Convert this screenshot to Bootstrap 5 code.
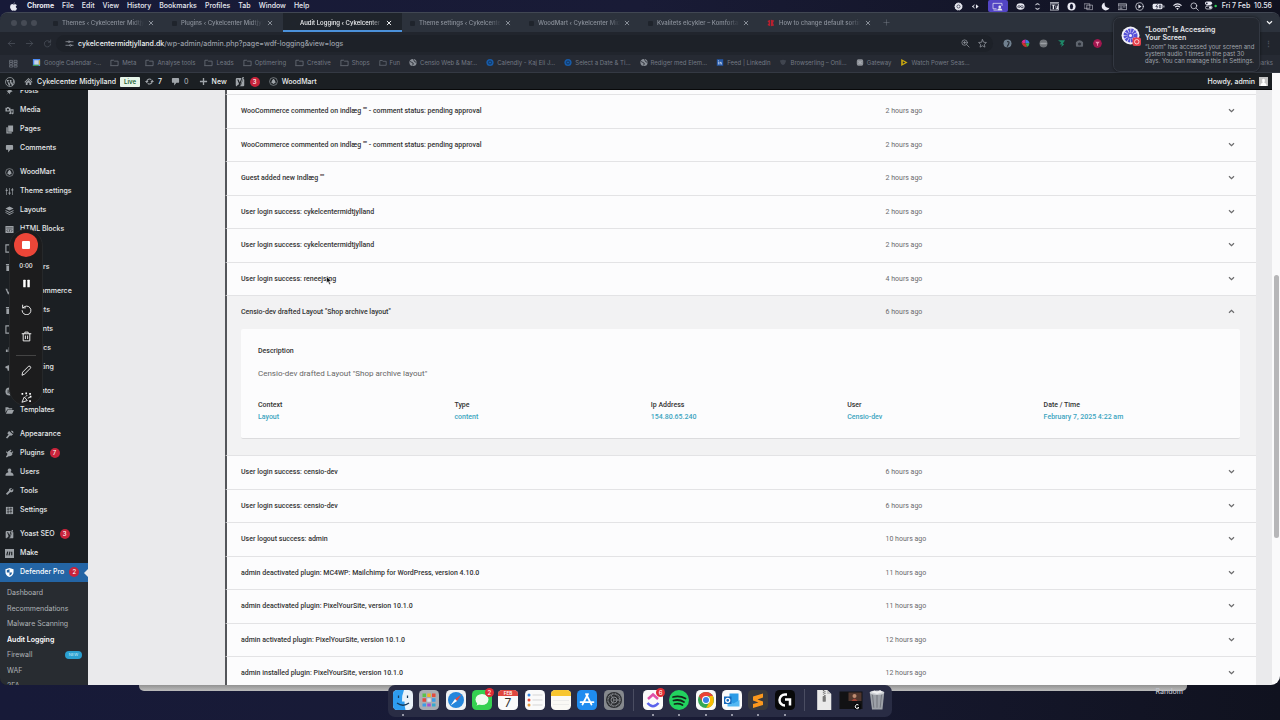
<!DOCTYPE html>
<html lang="en">
<head>
<meta charset="utf-8">
<meta name="viewport" content="width=device-width, initial-scale=1">
<title>Audit Logging ‹ Cykelcenter Midtjylland</title>
<link href="https://cdn.jsdelivr.net/npm/bootstrap@5.3.0/dist/css/bootstrap.min.css" rel="stylesheet">
<style>
  body{font:500 7px/10px Inter,"Liberation Sans",sans-serif;color:#e4e5e8;background:linear-gradient(90deg,#171a38,#191b36 50%,#10121f);}
  a{color:inherit;text-decoration:none}
  button{border:0;padding:0;background:none;color:inherit;font:inherit;line-height:inherit}
  svg{display:block;flex:none}
  .ic{width:9px;height:9px;fill:currentColor}
  .ln{fill:none;stroke:currentColor;stroke-width:1.6;stroke-linecap:round;stroke-linejoin:round}
  .menubar{height:12px;padding:0 8px 0 10px;color:#e9eaf2}
  .menubar .apps{gap:8px}
  .menubar .apple{width:7px;margin-right:2px}
  .menubar .tray{gap:8px}
  .share{width:20px;height:12px;background:#5244c4;border-radius:2px}
  .window{border-radius:8px 8px 9px 7px;background:#21252d;border-top:1px solid #414753}
  .tabs{height:19px;background:#2c323c;color:#8b919b;padding-left:11px}
  .light{width:6px;height:6px;border-radius:50%;background:#464b55}
  .lights{gap:4px;width:34px}
  .btab{width:119px;height:19px;padding:1px 6px 0 8px;gap:4px}
  .btab.active{color:#f1f3f5;background:linear-gradient(#1f242b 17px,#4b91da 17px)}
  .fav{width:5px;height:5px;border-radius:1px;background:#1f242c}
  .tabname{width:82px;overflow:hidden;white-space:nowrap;font-size:6px;-webkit-mask-image:linear-gradient(90deg,#000 85%,transparent);mask-image:linear-gradient(90deg,#000 85%,transparent)}
  .x{width:6px;height:6px}
  .tools{height:23px;padding:1px 8px 0 7px;color:#4e545e}
  .address{background:#1d2128;border-radius:9px;height:17px;color:#9a9fa7;padding:0 6px 0 9px;margin-left:4px;flex:1 1 auto}
  .host{color:#eff1f3}
  .exts{gap:9px;width:279px;padding-left:10px}
  .ext{width:9px;height:9px;border-radius:50%}
  .marks{height:18px;background:#262a33;color:#737983;padding:0 7px 0 9px;border-bottom:1px solid #343943;font-weight:400;font-size:6px}
  .marks .list{gap:9px}
  .bm{gap:3px}
  .marks .bm:nth-of-type(n+8) .ic{width:8px}
  .adminbar{height:17px;background:#1b1f23;padding:2px 4px 0 5px;color:#eef0f1;border-bottom:1px solid #08090a}
  .gray{color:#a0a5aa}
  .live{background:#e6f5e8;color:#19602e;font-weight:600;border-radius:1px;height:10px;width:20px;font-size:6px;line-height:10px}
  .cnt{min-width:10px;height:10px;border-radius:5px;background:#c9243b;color:#fff;font-size:6px;line-height:10px;text-align:center}
  .mi .cnt{margin-left:-1px}
  .side{width:88px;background:#1b1f23;color:#e8eaeb}
  .side ul{margin:0;padding:0;list-style:none}
  .top-list{margin-top:-8px !important}
  .mi{height:19px;padding-left:5px;gap:6px}
  .mi svg{color:#9ca1a6}
  .gap-top{margin-top:5px}
  .current{background:#2465a5;color:#fff;position:relative}
  .current svg{color:#fff}
  .current::after{content:"";position:absolute;right:0;top:6px;border:4px solid transparent;border-right-color:#eaeaec;border-left:0}
  .sub{background:#282c31;padding:4px 6px 0 7px !important;color:#afb3b7;font-weight:400;flex:1 1 0;overflow:hidden}
  .sub li{height:15px}
  .sub li:nth-child(even){height:16px}
  .new{background:#2ba0d0;color:#c8ecf8;border-radius:4px;width:17px;height:8px;font-size:4px;line-height:8px}
  .page{background:#eaeaec;padding-left:137px;padding-right:16px}
  .log{font-family:Roboto,"Liberation Sans",sans-serif;color:#333;background:#fcfcfd}
  .log .start{height:4px;border-left:2px solid #54565a}
  .entry{border-left:2px solid #54565a;border-top:1px solid #e3e3e5}
  .row-btn{display:grid;grid-template-columns:20fr 11fr;width:100%;height:32px;padding:0 16px 0 14px;align-items:center;text-align:left}
  .tall .row-btn{height:33px}
  .ago{color:#6a6a6c;font-weight:400}
  .chev{width:9px;height:9px;margin-right:4px}
  .opened{background:#f2f2f3;padding-bottom:16px}
  .opened .row-btn{height:33px}
  .panel{background:#fcfcfd;margin:0 16px 0 14px;height:110px;padding:17px 0 0 17px;border-radius:2px;border-bottom:1px solid #dcdcde}
  .panel h2{font-size:7px;line-height:10px;font-weight:500;margin:0}
  .panel p{font-size:8px;line-height:12px;font-weight:400;color:#666;margin:12px 0 19px}
  .facts{display:grid;grid-template-columns:repeat(5,1fr);margin:0}
  .facts dt,.facts dd{font-weight:500;margin:0;line-height:12px}
  .facts dd{color:#3ba4bf}
  .scroll{width:8px;background:#fafafb;position:relative}
  .thumb{position:absolute;right:1px;width:5px;top:33%;height:43%;border-radius:3px;background:#b6b6b8}
  .loom{position:absolute;left:9px;top:229px;width:34px;height:177px;background:#1c1c1d;border-radius:17px;padding-top:3px;z-index:3;border:1px solid #26282a}
  .loom svg{width:11px;height:11px}
  .rec{width:24px;height:24px;border-radius:50%;background:#ec4638}
  .rec i{width:8px;height:8px;background:#fff;border-radius:1px}
  .note{position:absolute;right:20px;top:17px;width:147px;height:55px;border-radius:7px;background:#23272f;border:1px solid #333842;box-shadow:0 0 3px #0008;z-index:5;padding:8px 7px;gap:4px}
  .note strong{line-height:8px;font-weight:600;color:#e3e5e9}
  .note small{font-size:6px;line-height:7px;color:#a1a5ac;font-weight:400;margin-top:1px}
  .pointer{position:absolute;left:326px;top:276px;z-index:4}
  .bottom{height:35px;position:relative}
  .behind{position:absolute;left:139px;right:93px;top:0;height:6px;border-radius:0 0 5px 5px;background:linear-gradient(#929292,#bcbcbc)}
  .random{position:absolute;right:97px;top:2px;font-size:7px;color:#c0c2ca}
  .dock{position:relative;width:504px;height:32px;border-radius:7px;background:#292c44;padding:5px 5px 7px 5px}
  .dock .sep{width:1px;height:22px;background:#4a4d62;margin:0 3px}
  .app{width:20px;height:20px;position:relative}
  .app svg{width:20px;height:20px}
  .on::after{content:"";position:absolute;left:9px;top:24px;width:2px;height:2px;border-radius:50%;background:#b7b9c6}
  .pip{position:absolute;right:-2px;top:-2px;width:9px;height:9px;border-radius:50%;background:#e02b35;color:#fff;font-size:6px;line-height:9px;text-align:center}
</style>
</head>
<body class="vh-100 overflow-hidden d-flex flex-column position-relative">

<svg width="0" height="0" class="position-absolute" aria-hidden="true"><defs>
  <symbol id="x" viewBox="0 0 10 10"><path class="ln" d="M2 2l6 6M8 2l-6 6"/></symbol>
  <symbol id="down" viewBox="0 0 18 18"><path d="M4 6.5l5 5 5-5" fill="none" stroke="currentColor" stroke-width="2.4"/></symbol>
  <symbol id="up" viewBox="0 0 18 18"><path d="M4 11.5l5-5 5 5" fill="none" stroke="currentColor" stroke-width="2.4"/></symbol>
  <symbol id="folder" viewBox="0 0 20 20"><path class="ln" d="M2 15.500V5h6l2 2h8v10H2z"/></symbol>
  <symbol id="globe" viewBox="0 0 20 20"><circle cx="10" cy="10" r="9" fill="#8a8f97"/><path d="M3 8c4-1 3 3 6 3s1 4 0 6M11 2c0 4 3 3 3 5s3 1 4 3" fill="none" stroke="#262a33" stroke-width="2.500"/></symbol>
  <symbol id="calendly" viewBox="0 0 20 20"><circle cx="10" cy="10" r="9" fill="#175ba9"/><circle cx="10" cy="10" r="4" fill="none" stroke="#0f2c4d" stroke-width="2"/></symbol>
  <symbol id="wp" viewBox="0 0 20 20"><circle cx="10" cy="10" r="9" fill="none" stroke="currentColor" stroke-width="1.500"/><path d="M3.500 7h4M5 7l3.500 10L11 9.500 10 7h3M11 7l3.500 10L17 9c.5-2-.7-2.500-.7-4" fill="none" stroke="currentColor" stroke-width="2"/></symbol>
  <symbol id="home" viewBox="0 0 20 20"><path d="M10 2l9 9-1.500 1.500L10 5l-7.500 7.500L1 11zM15 3h2v4l-2-2zM4 12.500l6-6 6 6V18h-4v-5H8v5H4z"/></symbol>
  <symbol id="sync" viewBox="0 0 20 20"><path d="M4 10a6 6 0 0 1 10-4M16 10a6 6 0 0 1-10 4" fill="none" stroke="currentColor" stroke-width="2.500"/><path d="M0 9h8l-4 5zM20 11h-8l4-5z"/></symbol>
  <symbol id="bubble" viewBox="0 0 20 20"><path d="M4 2h12q2 0 2 2v7q0 2-2 2h-4l-5 6v-6H4q-2 0-2-2V4q0-2 2-2z"/></symbol>
  <symbol id="plus" viewBox="0 0 20 20"><path d="M8.500 2h3v6.500H18v3h-6.500V18h-3v-6.500H2v-3h6.500z"/></symbol>
  <symbol id="yoast" viewBox="0 0 20 20"><path d="M4 2h9l-3.500 9L7 5H4.500L8 13.500Q7 17 4 17v1.500h12.500q2 0 2-2V6q0-2.500-2-3.500L11 16q-1 2.500-3.500 2.500H3.500q-2 0-2-2V4.500Q1.500 2 4 2zM15 0h3l-6 16-2 2z"/></symbol>
  <symbol id="wood" viewBox="0 0 20 20"><circle cx="10" cy="10" r="8.700" fill="none" stroke="currentColor" stroke-width="1.400"/><path d="M10 4c3 3 5 6 4.500 10h-3L10 16l-1.500-2h-3C5 10 7 7 10 4z"/></symbol>
  <symbol id="pin" viewBox="0 0 20 20"><path d="M10 3l7 7-3 .5-3 3 .5 3-4-4L2 18l5-6-4-4 3 .5 3-3z"/></symbol>
  <symbol id="media" viewBox="0 0 20 20"><path d="M1 4h3l1-2h3l1 2h3v8H1zM6.500 5.500a2.300 2.300 0 1 0 .1 0zM12 7h7v9q0 3-3 2.500t-1-4h2V10h-3v6q-1 3-4 2t1-4z" fill-rule="evenodd"/></symbol>
  <symbol id="pages" viewBox="0 0 20 20"><path d="M7 1h11v14H7zM3 5h3v11h9v3H3z"/></symbol>
  <symbol id="sliders" viewBox="0 0 20 20"><path d="M3 2h1.500v16H3zM9.300 2h1.500v16H9.300zM15.500 2H17v16h-1.500zM1.500 6h4.500v3H1.500zM7.800 12h4.500v3H7.800zM14 5h4.500v3H14z"/></symbol>
  <symbol id="layers" viewBox="0 0 20 20"><path d="M10 1l9 4.500-9 4.500-9-4.500zM1 9l9 4.500L19 9v2l-9 4.500L1 11zM1 13.500l9 4.500 9-4.500v1.500l-9 5-9-5z"/></symbol>
  <symbol id="code" viewBox="0 0 20 20"><path d="M1 2h18v16H1z"/><path d="M3 6.500h14M7 9.500l-3 3L7 15M13 9.500l3 3-3 2.500M11 9l-2 7" fill="none" stroke="#1b1f23" stroke-width="1.300"/></symbol>
  <symbol id="box" viewBox="0 0 20 20"><path d="M2 2h16v16H2z" fill="none" stroke="currentColor" stroke-width="2.500"/></symbol>
  <symbol id="solid" viewBox="0 0 20 20"><path d="M2 2h16v3H2zM3 6h14v12H3z"/></symbol>
  <symbol id="woo" viewBox="0 0 20 20"><path d="M1 4h4l2 8 4-7 3 7 3-8h3l-5 13-4-6-4 6z"/></symbol>
  <symbol id="bars" viewBox="0 0 20 20"><path d="M2 12h4v6H2zM8 7h4v11H8zM14 2h4v16h-4z"/></symbol>
  <symbol id="horn" viewBox="0 0 20 20"><path d="M1 8l14-6v14L9 13v4H6l-1-5-4-1z"/></symbol>
  <symbol id="elem" viewBox="0 0 20 20"><circle cx="10" cy="10" r="9"/><path d="M7 6v8M10 6h4M10 10h4M10 14h4" stroke="#1b1f23" stroke-width="2"/></symbol>
  <symbol id="openf" viewBox="0 0 20 20"><path d="M1 3h6l2 2h7v3H5L1 15zM6 9h14l-4 8H2z"/></symbol>
  <symbol id="brush" viewBox="0 0 20 20"><path d="M9 2l9 8-4 3-3-1-6 7-3-2 6-7-3-3zM14 1l4 2 1 5-5-4z"/></symbol>
  <symbol id="plug" viewBox="0 0 20 20"><path d="M13 1l1.500 1.500-3 3L14 8l3-3 1.500 1.500-3 3L17 11q-3 6-9 5l-4 3-2-2 3-4Q4 6 9 4zM3 4l3 5H3z"/></symbol>
  <symbol id="user" viewBox="0 0 20 20"><path d="M10 1a4 4 0 0 1 2.500 7.200L13 10q6 .5 6 7H1q0-6.500 6-7l.5-1.800A4 4 0 0 1 10 1z"/></symbol>
  <symbol id="wrench" viewBox="0 0 20 20"><path d="M16 2l-4 4 2 2 4-4q2 6-3 7.500-2 .5-3-.5l-7 7-3-3 7-7Q7 2 16 2z"/></symbol>
  <symbol id="settings" viewBox="0 0 20 20"><path d="M2 2h16v16H2z"/><path d="M7 3v14M13 3v14M4 7h6M10 12h6M10 6h6M4 13h6" stroke="#1b1f23" stroke-width="1.300"/></symbol>
  <symbol id="make" viewBox="0 0 20 20"><path d="M0 0h20v20H0z"/><path d="M6 6L4 14M11 6L9 14M15 6v8" stroke="#1b1f23" stroke-width="2.600"/></symbol>
  <symbol id="shield" viewBox="0 0 20 20"><path d="M10 0l9 3v6q0 8-9 11Q1 17 1 9V3zM10 3L4 5v5h6zM10 10v7q5-2 6-7z" fill-rule="evenodd"/></symbol>
</defs></svg>

<header class="menubar d-flex align-items-center justify-content-between">
  <nav class="apps d-flex align-items-center">
    <svg class="ic apple" viewBox="0 0 16 20"><path d="M11 0q0 3-3 4 0-3 3-4zM8 5.500Q11 4 13 5t2.500 2.500q-5 3 .5 7-2 5.500-5 5-3-1-5 0-3 .5-5.500-6Q-1 5 5 4.500z"/></svg>
    <a href="#" class="fw-bold">Chrome</a><a href="#">File</a><a href="#">Edit</a><a href="#">View</a><a href="#">History</a><a href="#">Bookmarks</a><a href="#">Profiles</a><a href="#">Tab</a><a href="#">Window</a><a href="#">Help</a>
  </nav>
  <div class="tray d-flex align-items-center">
    <svg class="ic" viewBox="0 0 20 20"><circle cx="10" cy="10" r="8" stroke="currentColor" stroke-width="2" stroke-dasharray="3 1.500"/><circle cx="10" cy="10" r="3.500" stroke="#171a30" stroke-width="1.500" fill="none"/></svg>
    <svg class="ic" viewBox="0 0 20 20"><path d="M8 5l-6 5 6 5v-3H6V8h2zM11 5l6 5-6 5z"/></svg>
    <span class="share d-flex align-items-center justify-content-center"><svg class="ic" style="width:11px" viewBox="0 0 24 20"><path class="ln" d="M9 15H2V3h20v5M4 18h6"/><circle cx="17" cy="11" r="3"/><path d="M11 19q1-5 6-5t6 5z"/></svg></span>
    <svg class="ic" viewBox="0 0 20 20"><ellipse cx="10" cy="10" rx="9" ry="7"/><path d="M5 13q-3-5 2-5l6 5q4 0 3-3t-6-1l-3 4" fill="none" stroke="#171a30" stroke-width="1.600"/></svg>
    <svg class="ic" viewBox="0 0 20 20"><path d="M4 8q6-10 12 0l-6-3zM4 12q6 10 12 0l-6 3z"/></svg>
    <svg class="ic" viewBox="0 0 20 20"><path class="ln" d="M1 4h18v14H1zM1 1h18"/><path d="M4 6h7v2H9v8H6V8H4zM12 8h2v6q2 2 2-6h2v8h-5z"/></svg>
    <svg class="ic" viewBox="0 0 20 20"><circle cx="10" cy="10" r="9"/><ellipse cx="10" cy="10" rx="3.500" ry="6" fill="#171a30"/></svg>
    <svg class="ic" viewBox="0 0 20 20"><path class="ln" d="M1 4h12v10H1zM7 7h12v10H7z" opacity=".7"/></svg>
    <svg class="ic" viewBox="0 0 20 20"><path d="M8 1a9 9 0 1 0 11 12Q7 14 8 1z"/></svg>
    <svg class="ic" viewBox="0 0 20 20"><path class="ln" d="M1 4h18v13H1zM1 7h18M4 11h5M12 11h4M4 14h5" opacity=".8"/></svg>
    <svg class="ic" viewBox="0 0 20 20"><circle class="ln" cx="10" cy="10" r="8.500"/><path d="M7.500 5.500l7 4.500-7 4.500z"/></svg>
    <svg class="ic" style="width:13px" viewBox="0 0 28 20"><rect x="1" y="4" width="22" height="12" rx="3"/><path d="M25 8h2v4h-2z"/><path d="M12 5l-4 5h4l-2 5M16 7h3v6h-3z" fill="none" stroke="#171a30" stroke-width="1.500"/></svg>
    <svg class="ic" viewBox="0 0 20 20"><path d="M1 8q9-8 18 0M4.500 11.500q5.500-5 11 0" fill="none" stroke="currentColor" stroke-width="2.600"/><path d="M7 14.500q3-2.500 6 0l-3 3z"/></svg>
    <svg class="ic" viewBox="0 0 20 20"><path class="ln" d="M14 14l4.500 4.500M15 8.500a6.500 6.500 0 1 1-13 0 6.500 6.500 0 0 1 13 0z"/></svg>
    <span class="d-flex" style="gap:5px;margin-left:-2px"><svg class="ic" style="width:12px" viewBox="0 0 27 20"><rect x="0" y="1" width="16" height="8" rx="4"/><rect class="ln" x="1" y="11" width="15" height="7" rx="3.500"/><circle cx="12" cy="14.500" r="3"/><circle cx="4" cy="5" r="2" fill="#171a30"/><circle cx="24" cy="11" r="2.700" fill="#2fd158"/></svg>
    <span>Fri 7 Feb&nbsp; 10.56</span></span>
  </div>
</header>

<div class="window flex-grow-1 d-flex flex-column overflow-hidden">
  <div class="tabs d-flex align-items-center">
    <div class="lights d-flex"><span class="light"></span><span class="light"></span><span class="light"></span></div>
    <div class="btab d-flex align-items-center"><i class="fav"></i><span class="tabname">Themes ‹ Cykelcenter Midtjylland</span><svg class="x"><use href="#x"/></svg></div>
    <div class="btab d-flex align-items-center"><i class="fav"></i><span class="tabname">Plugins ‹ Cykelcenter Midtjylland</span><svg class="x"><use href="#x"/></svg></div>
    <div class="btab active d-flex align-items-center"><i class="fav"></i><span class="tabname">Audit Logging ‹ Cykelcenter Midtjylland</span><svg class="x"><use href="#x"/></svg></div>
    <div class="btab d-flex align-items-center"><i class="fav"></i><span class="tabname">Theme settings ‹ Cykelcenter</span><svg class="x"><use href="#x"/></svg></div>
    <div class="btab d-flex align-items-center"><i class="fav"></i><span class="tabname">WoodMart ‹ Cykelcenter Midtjylland</span><svg class="x"><use href="#x"/></svg></div>
    <div class="btab d-flex align-items-center"><i class="fav"></i><span class="tabname">Kvalitets elcykler – Komfortable</span><svg class="x"><use href="#x"/></svg></div>
    <div class="btab d-flex align-items-center"><svg class="fav" style="background:none;width:8px;height:8px" viewBox="0 0 20 20"><path d="M1 5l7-3v16l-7-3 4-5zM10 2l8 2-3 6 3 6-8 2z" fill="#b8202f"/></svg><span class="tabname">How to change default sorting</span><svg class="x"><use href="#x"/></svg></div>
    <svg class="ic ms-1" viewBox="0 0 20 20"><path class="ln" d="M10 4v12M4 10h12" opacity=".5"/></svg>
    <svg class="ic ms-auto text-light" style="margin-right:6px" viewBox="0 0 18 18"><use href="#down"/></svg>
  </div>

  <div class="tools d-flex align-items-center">
    <div class="d-flex" style="gap:9px">
      <svg class="ic" viewBox="0 0 20 20"><path class="ln" d="M17 10H3M9 4l-6 6 6 6"/></svg>
      <svg class="ic" viewBox="0 0 20 20"><path class="ln" d="M3 10h14M11 4l6 6-6 6"/></svg>
      <svg class="ic" viewBox="0 0 20 20"><path class="ln" d="M16 7a7 7 0 1 0 1 4M17 2v5h-5"/></svg>
    </div>
    <div class="address d-flex align-items-center">
      <svg class="ic" viewBox="0 0 20 20"><path class="ln" d="M2 6h5M11 6h7M2 14h8M14 14h4"/><circle class="ln" cx="9" cy="6" r="2"/><circle class="ln" cx="12" cy="14" r="2"/></svg>
      <a href="#" class="ms-1 me-auto"><span class="host">cykelcentermidtjylland.dk</span>/wp-admin/admin.php?page=wdf-logging&amp;view=logs</a>
      <svg class="ic me-2" viewBox="0 0 20 20"><path class="ln" d="M13 13l5 5M14 8a6 6 0 1 1-12 0 6 6 0 0 1 12 0zM5.500 8h5M8 5.500v5"/></svg>
      <svg class="ic" viewBox="0 0 20 20"><path class="ln" d="M10 1.500l2.600 5.700 6.100.6-4.600 4.200 1.300 6.100L10 15l-5.400 3.100L5.900 12 1.300 7.800l6.100-.6z"/></svg>
    </div>
    <div class="exts d-flex align-items-center">
      <svg class="ext" viewBox="0 0 20 20"><circle cx="10" cy="10" r="9" fill="#70808f"/><path d="M9 6q6-1 4 4t-4 7" stroke="#262b34" stroke-width="2.500" fill="none"/></svg>
      <svg class="ext" viewBox="0 0 20 20"><path d="M10 10L1 8q2-7 9-7z" fill="#d92a8d"/><path d="M10 10V1q7 1 9 8z" fill="#3f7ce0"/><path d="M10 10l9-1q-1 7-6 9z" fill="#3ca757"/><path d="M10 10l3 8Q5 19 1 8z" fill="#c6332d"/></svg>
      <svg class="ext" viewBox="0 0 20 20"><circle cx="10" cy="10" r="9" fill="#6f7378"/><path d="M3 10h14" stroke="#9ca0a5" stroke-width="3"/></svg>
      <svg class="ext" viewBox="0 0 20 20"><path d="M2 3h16l-5 7 3 2-7 6 2-6H6l3-4z" fill="#1e8767"/></svg>
      <svg class="ext" viewBox="0 0 20 20"><path d="M2 7l4-3q4-3 8 0l4 3v10H2z" fill="#5f656e"/><circle cx="10" cy="11" r="3.500" fill="#2b3039"/></svg>
      <svg class="ext" viewBox="0 0 20 20"><circle cx="10" cy="10" r="10" fill="#a2174f"/><path d="M5 6h10l-4 5v4H9v-4z" fill="#ec8cad"/></svg>
      <span class="ms-auto fw-bold">⋮</span>
    </div>
  </div>

  <div class="marks d-flex align-items-center justify-content-between">
    <div class="list d-flex align-items-center">
      <svg class="ic" style="margin-right:5px" viewBox="0 0 20 20"><path class="ln" d="M2 3h6v4H2zM12 3h6v4h-6zM2 8h6v4H2zM12 8h6v4h-6zM2 14h6v4H2zM12 14h6v4h-6z"/></svg>
      <a href="#" class="bm d-flex"><svg class="ic" viewBox="0 0 20 20"><path d="M2 2h16v16H2z" fill="#4c8bf5"/><path d="M5 5h10v10H5z" fill="#c6d3e5"/><path d="M2 15h13v3H2z" fill="#3b9c55"/><path d="M15 5h3v10h-3z" fill="#c8a936"/></svg><span class="text-nowrap">Google Calendar -…</span></a>
      <a href="#" class="bm d-flex"><svg class="ic"><use href="#folder"/></svg><span>Meta</span></a>
      <a href="#" class="bm d-flex"><svg class="ic"><use href="#folder"/></svg><span class="text-nowrap">Analyse tools</span></a>
      <a href="#" class="bm d-flex"><svg class="ic"><use href="#folder"/></svg><span>Leads</span></a>
      <a href="#" class="bm d-flex"><svg class="ic"><use href="#folder"/></svg><span>Optimering</span></a>
      <a href="#" class="bm d-flex"><svg class="ic"><use href="#folder"/></svg><span>Creative</span></a>
      <a href="#" class="bm d-flex"><svg class="ic"><use href="#folder"/></svg><span>Shops</span></a>
      <a href="#" class="bm d-flex"><svg class="ic"><use href="#folder"/></svg><span>Fun</span></a>
      <a href="#" class="bm d-flex"><svg class="ic"><use href="#globe"/></svg><span class="text-nowrap">Censio Web &amp; Mar…</span></a>
      <a href="#" class="bm d-flex"><svg class="ic"><use href="#calendly"/></svg><span class="text-nowrap">Calendly - Kaj Eli J…</span></a>
      <a href="#" class="bm d-flex"><svg class="ic"><use href="#calendly"/></svg><span class="text-nowrap">Select a Date &amp; Ti…</span></a>
      <a href="#" class="bm d-flex"><svg class="ic"><use href="#globe"/></svg><span class="text-nowrap">Rediger med Elem…</span></a>
      <a href="#" class="bm d-flex"><svg class="ic" viewBox="0 0 20 20"><path d="M2 2h16v16H2z" fill="#2458a8"/><path d="M6 8v7M10 8v7M10 11q4-5 4 4" fill="none" stroke="#cbd8ee" stroke-width="2"/><circle cx="6" cy="5.500" r="1.300" fill="#cbd8ee"/></svg><span class="text-nowrap">Feed | LinkedIn</span></a>
      <a href="#" class="bm d-flex"><svg class="ic" viewBox="0 0 20 20"><path d="M2 5l8-2 8 2-3 8-5 4-5-4z" fill="#40454f"/></svg><span class="text-nowrap">Browserling – Onli…</span></a>
      <a href="#" class="bm d-flex"><svg class="ic" viewBox="0 0 20 20"><rect x="2" y="2" width="16" height="16" rx="4" fill="#8d9198"/><path d="M6 6l8 8M14 6l-8 8" stroke="#b9bcc2" stroke-width="2"/></svg><span>Gateway</span></a>
      <a href="#" class="bm d-flex"><svg class="ic" viewBox="0 0 20 20"><path d="M3 1l16 9-16 9z" fill="#c9a90f"/><path d="M7 7l6 3-6 3z" fill="#262a33"/></svg><span class="text-nowrap">Watch Power Seas…</span></a>
    </div>
    <a href="#">All Bookmarks</a>
  </div>

  <div class="d-flex flex-grow-1 overflow-hidden">
    <div class="d-flex flex-column flex-grow-1 overflow-hidden">
      <div class="adminbar d-flex align-items-center">
        <svg class="ic gray" style="width:10px;height:10px;margin-right:9px"><use href="#wp"/></svg>
        <a href="#" class="d-flex" style="gap:4px"><svg class="ic gray"><use href="#home"/></svg>Cykelcenter Midtjylland</a>
        <span class="live text-center ms-1">Live</span>
        <a href="#" class="d-flex" style="gap:4px;margin-left:5px"><svg class="ic gray"><use href="#sync"/></svg>7</a>
        <a href="#" class="d-flex gray" style="gap:4px;margin-left:9px"><svg class="ic"><use href="#bubble"/></svg>0</a>
        <a href="#" class="d-flex" style="gap:4px;margin-left:10px"><svg class="ic gray"><use href="#plus"/></svg>New</a>
        <a href="#" class="d-flex" style="gap:5px;margin-left:8px"><svg class="ic gray" style="width:10px;height:10px"><use href="#yoast"/></svg><span class="cnt">3</span></a>
        <a href="#" class="d-flex" style="gap:4px;margin-left:9px"><svg class="ic gray"><use href="#wood"/></svg>WoodMart</a>
        <a href="#" class="d-flex ms-auto" style="gap:4px">Howdy, admin<svg class="ic" viewBox="0 0 20 20"><path d="M0 0h20v20H0z" fill="#c4c4c4"/><path d="M3 20q0-6 5-7-3-9 2-9t2 9q5 1 5 7z" fill="#fff"/></svg></a>
      </div>
      <div class="d-flex flex-grow-1 overflow-hidden">
        <nav class="side d-flex flex-column flex-shrink-0 overflow-hidden">
          <ul class="top-list">
            <li><a href="#" class="mi d-flex align-items-center"><svg class="ic"><use href="#pin"/></svg>Posts</a></li>
            <li><a href="#" class="mi d-flex align-items-center"><svg class="ic"><use href="#media"/></svg>Media</a></li>
            <li><a href="#" class="mi d-flex align-items-center"><svg class="ic"><use href="#pages"/></svg>Pages</a></li>
            <li><a href="#" class="mi d-flex align-items-center"><svg class="ic"><use href="#bubble"/></svg>Comments</a></li>
            <li class="gap-top"><a href="#" class="mi d-flex align-items-center"><svg class="ic"><use href="#wood"/></svg>WoodMart</a></li>
            <li><a href="#" class="mi d-flex align-items-center"><svg class="ic"><use href="#sliders"/></svg>Theme settings</a></li>
            <li><a href="#" class="mi d-flex align-items-center"><svg class="ic"><use href="#layers"/></svg>Layouts</a></li>
            <li><a href="#" class="mi d-flex align-items-center"><svg class="ic"><use href="#code"/></svg>HTML Blocks</a></li>
            <li><a href="#" class="mi d-flex align-items-center"><svg class="ic"><use href="#box"/></svg>Slides</a></li>
            <li><a href="#" class="mi d-flex align-items-center"><svg class="ic"><use href="#solid"/></svg>Sidebars</a></li>
            <li class="gap-top"><a href="#" class="mi d-flex align-items-center"><svg class="ic"><use href="#woo"/></svg>WooCommerce</a></li>
            <li><a href="#" class="mi d-flex align-items-center"><svg class="ic"><use href="#solid"/></svg>Products</a></li>
            <li><a href="#" class="mi d-flex align-items-center"><svg class="ic"><use href="#box"/></svg>Payments</a></li>
            <li><a href="#" class="mi d-flex align-items-center"><svg class="ic"><use href="#bars"/></svg>Analytics</a></li>
            <li><a href="#" class="mi d-flex align-items-center"><svg class="ic"><use href="#horn"/></svg>Marketing</a></li>
            <li class="gap-top"><a href="#" class="mi d-flex align-items-center"><svg class="ic"><use href="#elem"/></svg>Elementor</a></li>
            <li><a href="#" class="mi d-flex align-items-center"><svg class="ic"><use href="#openf"/></svg>Templates</a></li>
            <li class="gap-top"><a href="#" class="mi d-flex align-items-center"><svg class="ic"><use href="#brush"/></svg>Appearance</a></li>
            <li><a href="#" class="mi d-flex align-items-center"><svg class="ic"><use href="#plug"/></svg>Plugins<span class="cnt">7</span></a></li>
            <li><a href="#" class="mi d-flex align-items-center"><svg class="ic"><use href="#user"/></svg>Users</a></li>
            <li><a href="#" class="mi d-flex align-items-center"><svg class="ic"><use href="#wrench"/></svg>Tools</a></li>
            <li><a href="#" class="mi d-flex align-items-center"><svg class="ic"><use href="#settings"/></svg>Settings</a></li>
            <li class="gap-top"><a href="#" class="mi d-flex align-items-center"><svg class="ic"><use href="#yoast"/></svg>Yoast SEO<span class="cnt">3</span></a></li>
            <li><a href="#" class="mi d-flex align-items-center"><svg class="ic"><use href="#make"/></svg>Make</a></li>
            <li><a href="#" class="mi current d-flex align-items-center"><svg class="ic"><use href="#shield"/></svg>Defender Pro<span class="cnt">2</span></a></li>
          </ul>
          <ul class="sub">
            <li class="d-flex align-items-center"><a href="#">Dashboard</a></li>
            <li class="d-flex align-items-center"><a href="#">Recommendations</a></li>
            <li class="d-flex align-items-center"><a href="#">Malware Scanning</a></li>
            <li class="d-flex align-items-center"><a href="#" class="fw-semibold text-white">Audit Logging</a></li>
            <li class="d-flex align-items-center justify-content-between"><a href="#">Firewall</a><span class="new text-center">NEW</span></li>
            <li class="d-flex align-items-center"><a href="#">WAF</a></li>
            <li class="d-flex align-items-center"><a href="#">2FA</a></li>
          </ul>
        </nav>

        <main class="page flex-grow-1 overflow-hidden">
          <div class="log">
            <div class="start"></div>
            <div class="entry tall"><button type="button" class="row-btn"><span>WooCommerce commented on indlæg "" - comment status: pending approval</span><span class="ago d-flex justify-content-between">2 hours ago<svg class="chev"><use href="#down"/></svg></span></button></div>
            <div class="entry"><button type="button" class="row-btn"><span>WooCommerce commented on indlæg "" - comment status: pending approval</span><span class="ago d-flex justify-content-between">2 hours ago<svg class="chev"><use href="#down"/></svg></span></button></div>
            <div class="entry tall"><button type="button" class="row-btn"><span>Guest added new Indlæg ""</span><span class="ago d-flex justify-content-between">2 hours ago<svg class="chev"><use href="#down"/></svg></span></button></div>
            <div class="entry"><button type="button" class="row-btn"><span>User login success: cykelcentermidtjylland</span><span class="ago d-flex justify-content-between">2 hours ago<svg class="chev"><use href="#down"/></svg></span></button></div>
            <div class="entry tall"><button type="button" class="row-btn"><span>User login success: cykelcentermidtjylland</span><span class="ago d-flex justify-content-between">2 hours ago<svg class="chev"><use href="#down"/></svg></span></button></div>
            <div class="entry"><button type="button" class="row-btn"><span>User login success: reneejsing</span><span class="ago d-flex justify-content-between">4 hours ago<svg class="chev"><use href="#down"/></svg></span></button></div>
            <div class="entry opened">
              <button type="button" class="row-btn" aria-expanded="true"><span>Censio-dev drafted Layout "Shop archive layout"</span><span class="ago d-flex justify-content-between">6 hours ago<svg class="chev"><use href="#up"/></svg></span></button>
              <section class="panel">
                <h2>Description</h2>
                <p>Censio-dev drafted Layout "Shop archive layout"</p>
                <dl class="facts">
                  <div><dt>Context</dt><dd><a href="#">Layout</a></dd></div>
                  <div><dt>Type</dt><dd><a href="#">content</a></dd></div>
                  <div><dt>Ip Address</dt><dd><a href="#">154.80.65.240</a></dd></div>
                  <div><dt>User</dt><dd><a href="#">Censio-dev</a></dd></div>
                  <div><dt>Date / Time</dt><dd><a href="#">February 7, 2025 4:22 am</a></dd></div>
                </dl>
              </section>
            </div>
            <div class="entry tall"><button type="button" class="row-btn"><span>User login success: censio-dev</span><span class="ago d-flex justify-content-between">6 hours ago<svg class="chev"><use href="#down"/></svg></span></button></div>
            <div class="entry"><button type="button" class="row-btn"><span>User login success: censio-dev</span><span class="ago d-flex justify-content-between">6 hours ago<svg class="chev"><use href="#down"/></svg></span></button></div>
            <div class="entry tall"><button type="button" class="row-btn"><span>User logout success: admin</span><span class="ago d-flex justify-content-between">10 hours ago<svg class="chev"><use href="#down"/></svg></span></button></div>
            <div class="entry"><button type="button" class="row-btn"><span>admin deactivated plugin: MC4WP: Mailchimp for WordPress, version 4.10.0</span><span class="ago d-flex justify-content-between">11 hours ago<svg class="chev"><use href="#down"/></svg></span></button></div>
            <div class="entry tall"><button type="button" class="row-btn"><span>admin deactivated plugin: PixelYourSite, version 10.1.0</span><span class="ago d-flex justify-content-between">11 hours ago<svg class="chev"><use href="#down"/></svg></span></button></div>
            <div class="entry"><button type="button" class="row-btn"><span>admin activated plugin: PixelYourSite, version 10.1.0</span><span class="ago d-flex justify-content-between">12 hours ago<svg class="chev"><use href="#down"/></svg></span></button></div>
            <div class="entry tall"><button type="button" class="row-btn"><span>admin installed plugin: PixelYourSite, version 10.1.0</span><span class="ago d-flex justify-content-between">12 hours ago<svg class="chev"><use href="#down"/></svg></span></button></div>
          </div>
        </main>
      </div>
    </div>
    <div class="scroll flex-shrink-0"><div class="thumb"></div></div>
  </div>
</div>

<aside class="loom d-flex flex-column align-items-center text-white">
  <button type="button" class="rec d-flex align-items-center justify-content-center" aria-label="Stop recording"><i></i></button>
  <span class="lh-1" style="font-size:6px;margin-top:6px">0:00</span>
  <button type="button" style="margin-top:9px" aria-label="Pause"><svg class="ic" viewBox="0 0 20 20"><rect x="4" y="3" width="4.500" height="14" rx="1"/><rect x="11.500" y="3" width="4.500" height="14" rx="1"/></svg></button>
  <button type="button" style="margin-top:15px" aria-label="Restart"><svg class="ic" viewBox="0 0 20 20"><path class="ln" d="M3 2v5h5M3.500 7a8 8 0 1 1-1.500 5"/></svg></button>
  <button type="button" style="margin-top:16px" aria-label="Delete"><svg class="ic" viewBox="0 0 20 20"><path class="ln" d="M2 5h16M7 4V2h6v2M4 5v13h12V5M8 9v5M12 9v5"/></svg></button>
  <i class="border-top" style="width:20px;border-color:#444!important;margin-top:13px"></i>
  <button type="button" style="margin-top:9px" aria-label="Draw"><svg class="ic" viewBox="0 0 20 20"><path class="ln" d="M2 18l1-5L14 2q3-1 4 3L7 16z"/></svg></button>
  <button type="button" style="margin-top:16px" aria-label="Confetti"><svg class="ic" viewBox="0 0 20 20"><path class="ln" d="M2 18l4-9 5 6zM9 8l2-2M13 11l4-2"/><path d="M1 2h3v3H1zM8 1h3v3H8zM15 2h3v3h-3zM16 7h3v3h-3zM15 15h3v3h-3z"/></svg></button>
</aside>

<aside class="note d-flex">
  <svg width="20" height="20" viewBox="0 0 40 40"><circle cx="19" cy="19" r="18" fill="#f1f1f8"/><circle cx="19" cy="19" r="10" fill="none" stroke="#5551d8" stroke-width="8" stroke-dasharray="4 1.240"/><circle cx="19" cy="19" r="6" fill="#5551d8"/><circle cx="19" cy="19" r="3" fill="#f1f1f8"/><rect x="23" y="23" width="17" height="17" rx="4" fill="#e5404a"/><circle cx="31.500" cy="31.500" r="4.500" fill="none" stroke="#fff" stroke-width="1.500"/></svg>
  <div class="d-flex flex-column text-nowrap"><strong>“Loom” Is Accessing<br>Your Screen</strong><small>“Loom” has accessed your screen and<br>system audio 1 times in the past 30<br>days. You can manage this in Settings.</small></div>
</aside>

<svg class="pointer" width="6" height="9" viewBox="0 0 12 18"><path d="M1 1v13l3-3 2.500 6 2.500-1-2.500-5.500H11z" fill="#111" stroke="#fff" stroke-width="1"/></svg>

<footer class="bottom flex-shrink-0 d-flex justify-content-center">
  <div class="behind"></div><span class="random lh-base">Random</span>
  <div class="dock d-flex align-items-center justify-content-between">
    <div class="app on"><svg viewBox="0 0 40 40"><rect width="40" height="40" rx="9" fill="#eaf2f9"/><path d="M9 0h13q-5 12-4 23h5q0 10 2 17H9q-9 0-9-9V9q0-9 9-9z" fill="#2e9df0"/><path d="M11 11v5M29 11v5M8 26q12 9 24 0" fill="none" stroke="#163a5c" stroke-width="2.500"/></svg></div>
    <div class="app"><svg viewBox="0 0 40 40"><rect width="40" height="40" rx="9" fill="#a9adb3"/><path d="M7 7h7v7H7z" fill="#58c34a"/><path d="M16.500 7h7v7h-7z" fill="#f0b429"/><path d="M26 7h7v7h-7zM7 16.500h7v7H7z" fill="#e34b3e"/><path d="M16.500 16.500h7v7h-7z" fill="#dce3ea"/><path d="M26 16.500h7v7h-7zM7 27h7v6H7z" fill="#3c9ce8"/><path d="M16.500 27h7v6h-7z" fill="#a84fd0"/><path d="M26 27h7v6h-7z" fill="#35a8cf"/></svg></div>
    <div class="app"><svg viewBox="0 0 40 40"><rect width="40" height="40" rx="9" fill="#f0f2f4"/><circle cx="20" cy="20" r="16" fill="#2586dc"/><path d="M31 9L22 22l-4-4z" fill="#e8473e"/><path d="M9 31l9-13 4 4z" fill="#fff"/></svg></div>
    <div class="app"><svg viewBox="0 0 40 40"><rect width="40" height="40" rx="9" fill="#35d151"/><ellipse cx="20" cy="19" rx="13" ry="11" fill="#effbef"/><path d="M11 25q0 5-4 6 7 0 9-4z" fill="#effbef"/></svg><span class="pip">2</span></div>
    <div class="app"><svg viewBox="0 0 40 40"><rect width="40" height="40" rx="9" fill="#fafafa"/><path d="M9 0h22q9 0 9 9v3H0V9q0-9 9-9z" fill="#e0463e"/><text x="20" y="10" font-size="9" font-weight="600" fill="#fff" text-anchor="middle">FEB</text><text x="20" y="34" font-size="24" font-weight="400" fill="#333" text-anchor="middle">7</text></svg></div>
    <div class="app"><svg viewBox="0 0 40 40"><rect width="40" height="40" rx="9" fill="#fafafa"/><circle cx="8" cy="10" r="3" fill="#3286e8"/><circle cx="8" cy="20" r="3" fill="#e8503e"/><circle cx="8" cy="30" r="3" fill="#e89c3e"/><path d="M15 10h20M15 20h20M15 30h20" stroke="#d5d5d5" stroke-width="2"/></svg></div>
    <div class="app"><svg viewBox="0 0 40 40"><rect width="40" height="40" rx="9" fill="#faf9f5"/><path d="M9 0h22q9 0 9 9v3H0V9q0-9 9-9z" fill="#f7c52e"/><path d="M4 21h32M4 29h32" stroke="#dedede"/></svg></div>
    <div class="app"><svg viewBox="0 0 40 40"><rect width="40" height="40" rx="9" fill="#1f8cf0"/><path d="M22 8L11 29M18 8l11 21M7 24h18M29 24h4" fill="none" stroke="#fff" stroke-width="3.500" stroke-linecap="round"/></svg></div>
    <div class="app"><svg viewBox="0 0 40 40"><rect width="40" height="40" rx="9" fill="#85888d"/><circle cx="20" cy="20" r="16" fill="#2c2e31"/><circle cx="20" cy="20" r="12" fill="none" stroke="#85888d" stroke-width="3" stroke-dasharray="2 1"/><circle cx="20" cy="20" r="6" fill="none" stroke="#85888d" stroke-width="2"/><path d="M20 20h12M20 20l-6-10M20 20l-6 10" stroke="#85888d" stroke-width="2"/></svg></div>
    <i class="sep"></i>
    <div class="app on"><svg viewBox="0 0 40 40"><rect width="40" height="40" rx="9" fill="#fafafa"/><path d="M10 18l10-9 10 9" fill="none" stroke="#e04fa8" stroke-width="5"/><path d="M9 26q11 13 22 0" fill="none" stroke="#5a62ec" stroke-width="5"/></svg><span class="pip">6</span></div>
    <div class="app on"><svg viewBox="0 0 40 40"><circle cx="20" cy="20" r="20" fill="#22d35f"/><path d="M8 14q13-4 25 3M9 21q12-3 21 3M11 28q9-2 16 2" fill="none" stroke="#14251a" stroke-width="3.500" stroke-linecap="round"/></svg></div>
    <div class="app on"><svg viewBox="0 0 40 40"><rect width="40" height="40" rx="9" fill="#fafafa"/><circle cx="20" cy="20" r="16" fill="#35a853"/><path d="M6 12q5-8 14-8t14 8H20l-7 12z" fill="#e94235"/><path d="M20 36l7-12V12h7q6 22-14 24z" fill="#fbbc05"/><circle cx="20" cy="20" r="8" fill="#fff"/><circle cx="20" cy="20" r="6" fill="#3c7fe8"/></svg></div>
    <div class="app on"><svg viewBox="0 0 40 40"><rect width="40" height="40" rx="9" fill="#fafafa"/><path d="M15 7h18v22H15z" fill="#2b9be6"/><path d="M11 20l12 7 12-7v13H11z" fill="#54b8f2"/><path d="M4 13h15v15H4z" fill="#1569bd"/><circle cx="11.500" cy="20.500" r="4" fill="none" stroke="#fff" stroke-width="2.500"/></svg></div>
    <div class="app on"><svg viewBox="0 0 40 40"><rect width="40" height="40" rx="9" fill="#393a3d"/><path d="M10 13l20-6v8l-11 4 11 4v7l-20 6v-8l11-3-11-4z" fill="#fb981d"/></svg></div>
    <div class="app on"><svg viewBox="0 0 40 40"><rect width="40" height="40" rx="9" fill="#08090a"/><path d="M24 9h-4a11 11 0 0 0 0 22M20 19h10v12" fill="none" stroke="#fff" stroke-width="5"/></svg></div>
    <i class="sep"></i>
    <div class="app"><svg viewBox="0 0 40 44"><path d="M5 0h22l9 9v35H5z" fill="#eaeaea"/><path d="M27 0v9h9" fill="#c1c1c1"/><path d="M19 0v10M22 3v10" stroke="#666" stroke-width="3" stroke-dasharray="2 2"/><rect x="17" y="13" width="7" height="13" rx="2" fill="#777"/></svg></div>
    <div class="app"><svg viewBox="0 0 40 40" overflow="visible"><path d="M-3 3h46v35H-3z" fill="#121214"/><path d="M15 5h26v17H15z" fill="#51372e"/><circle cx="27" cy="12" r="4" fill="#c08d72"/><path d="M21 22q6-10 12 0z" fill="#a04436"/><rect x="26" y="27" width="14" height="12" rx="3" fill="#08090a"/><path d="M35 30a4 4 0 1 0 1 5h-3" fill="none" stroke="#fff" stroke-width="2"/></svg></div>
    <div class="app"><svg viewBox="0 0 40 44"><path d="M4 5h32l-4 38H9z" fill="#9da1a8"/><path d="M10 10l3 29M20 10v29M30 10l-3 29" stroke="#6e727b" stroke-width="2"/><ellipse cx="20" cy="6" rx="16" ry="5" fill="#cfd2d6"/><path d="M8 5l6-4 6 3 7-4 5 5-12 4z" fill="#f0f0f2"/></svg></div>
  </div>
</footer>
<script src="https://cdn.jsdelivr.net/npm/bootstrap@5.3.0/dist/js/bootstrap.bundle.min.js"></script>
</body>
</html>
